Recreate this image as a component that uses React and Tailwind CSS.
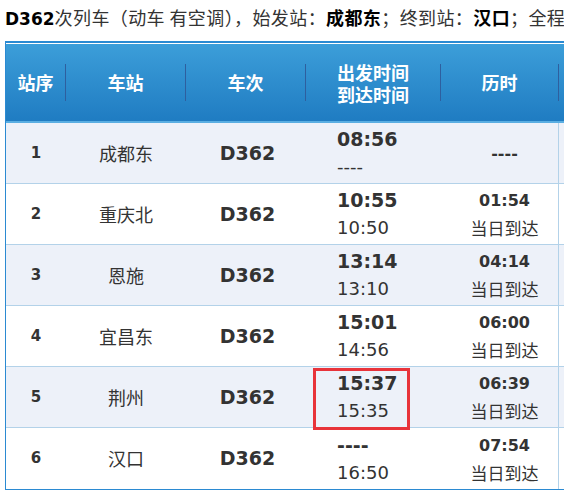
const STOPS = [
  { no: 1, name: '成都东', dep: '08:56', arr: '----', dur: '----', note: '' },
  { no: 2, name: '重庆北', dep: '10:55', arr: '10:50', dur: '01:54', note: '当日到达' },
  { no: 3, name: '恩施', dep: '13:14', arr: '13:10', dur: '04:14', note: '当日到达' },
  { no: 4, name: '宜昌东', dep: '15:01', arr: '14:56', dur: '06:00', note: '当日到达' },
  { no: 5, name: '荆州', dep: '15:37', arr: '15:35', dur: '06:39', note: '当日到达', mark: true },
  { no: 6, name: '汉口', dep: '----', arr: '16:50', dur: '07:54', note: '当日到达' },
];

const FONT = "font-['DejaVu_Sans','Noto_Sans_CJK_SC',sans-serif]";
const CJK = "font-['Noto_Sans_CJK_SC',sans-serif]";

function Sep() {
  return <div className="w-px h-[37px] bg-[#2e5f9f] shrink-0" />;
}

export default function App() {
  return (
    <div className={`${FONT} w-[564px] h-[494px] overflow-hidden bg-white pt-[4px] pl-[5px] text-[#333]`}>
      <div className={`${CJK} h-[26px] leading-[26px] text-[18px] tracking-[0.4px] whitespace-nowrap overflow-hidden`}>
        <b className={`${FONT} text-black text-[17px] tracking-normal`}>D362</b>次列车（动车 有空调），始发站：<b className="text-black">成都东</b>；终到站：<b className="text-black">汉口</b>；全程
      </div>

      <div className="mt-[11px] w-[760px] border-l border-[#2b8ad2] border-t-2 border-b">
        <div className="pt-px bg-white">
          <div className={`${CJK} flex items-center h-[77px] bg-gradient-to-b from-[#3c9ed9] to-[#1f7cc2] text-white font-bold text-[18px]`}>
            <div className="w-[59px] text-center">站序</div>
            <Sep />
            <div className="w-[119px] text-center">车站</div>
            <Sep />
            <div className="w-[119px] text-center">车次</div>
            <Sep />
            <div className="w-[134px] text-center leading-[22px]">
              <div>出发时间</div>
              <div>到达时间</div>
            </div>
            <Sep />
            <div className="w-[117px] text-center">历时</div>
            <Sep />
            <div className="flex-1" />
          </div>
          <div className="h-[2px] bg-[#5aaee2]" />
        </div>

        {STOPS.map((s, i) => (
          <div
            key={s.no}
            className={`flex h-[61px] ${i < STOPS.length - 1 ? 'border-b border-[#b3d2e9]' : ''} ${i % 2 === 0 ? 'bg-[#edf1f9]' : 'bg-white'}`}
          >
            <div className="w-[60px] flex items-center justify-center font-bold text-[15px]">{s.no}</div>
            <div className={`${CJK} w-[120px] flex items-center justify-center text-[18px]`}>{s.name}</div>
            <div className="w-[120px] flex items-center justify-center font-bold text-[19px] pl-[3px]">D362</div>
            <div className="relative w-[135px] flex flex-col justify-center pl-[31px] leading-[27px]">
              <div className="font-bold text-[19px]">{s.dep}</div>
              <div className="text-[18px]">{s.arr}</div>
              {s.mark && (
                <div className="absolute left-[7px] top-px w-[97px] h-[62px] border-[3px] border-[#e8333a]" />
              )}
            </div>
            <div className="w-[118px] flex flex-col items-center justify-center pl-[10px] border-r border-[#b3d2e9] leading-[27px]">
              <div className="font-bold text-[16px]">{s.dur}</div>
              {s.note && <div className={`${CJK} text-[17px]`}>{s.note}</div>}
            </div>
            <div className="flex-1" />
          </div>
        ))}
      </div>
    </div>
  );
}
